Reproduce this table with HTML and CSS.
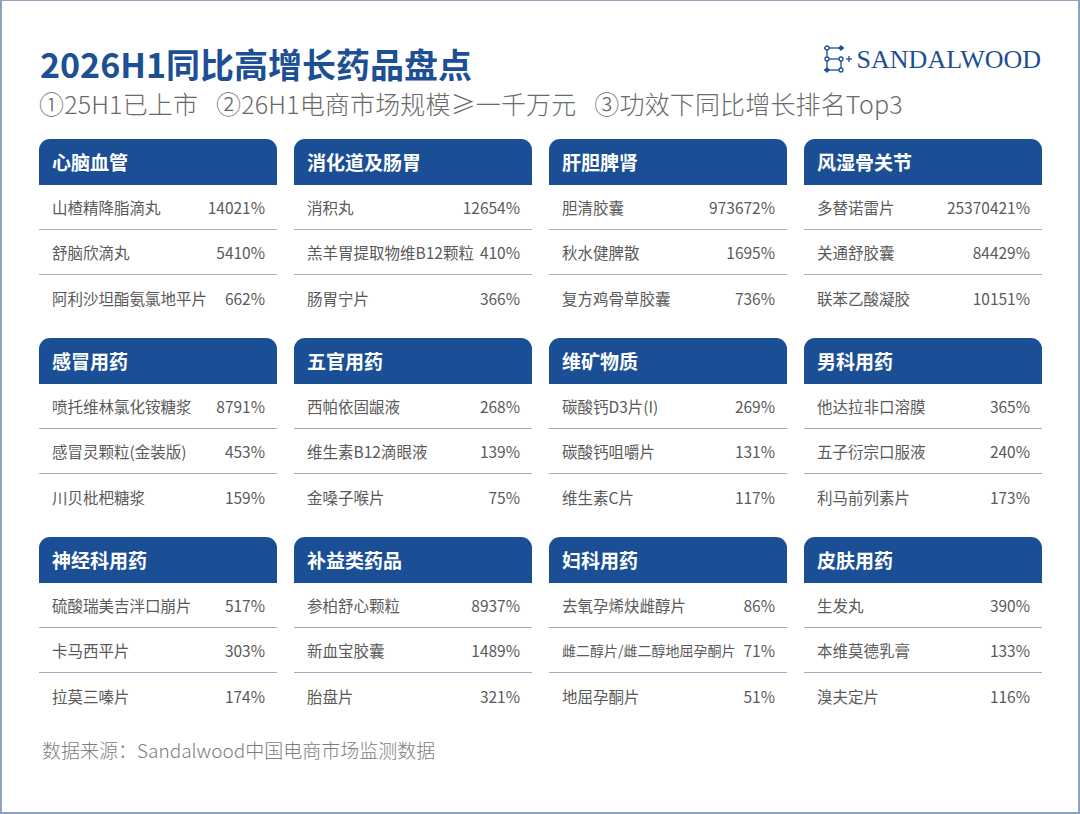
FILE: index.html
```html
<!DOCTYPE html>
<html lang="zh-CN">
<head>
<meta charset="utf-8">
<link rel="stylesheet" href="styles.css">
</head>
<body>
<div class="page">
  <header class="top">
    <div class="title-row">
      <h1 class="title">2026H1同比高增长药品盘点</h1>
      <div class="logo">
        <svg class="logo-mark" width="32" height="30" viewBox="0 0 32 30">
          <g stroke="#1d4f93" stroke-width="1.3" fill="none">
            <line x1="5" y1="3" x2="19" y2="3"/>
            <line x1="5" y1="14" x2="19" y2="14"/>
            <line x1="5" y1="25" x2="19" y2="25"/>
            <line x1="5" y1="3" x2="5" y2="25"/>
            <line x1="19" y1="14" x2="19" y2="25"/>
            <line x1="2" y1="3" x2="5" y2="3"/>
            <line x1="2" y1="25" x2="5" y2="25"/>
            <line x1="19" y1="3" x2="22" y2="3"/>
            <circle cx="5" cy="3" r="2" fill="#fff"/>
            <circle cx="5" cy="14" r="2" fill="#fff"/>
            <circle cx="19" cy="14" r="2" fill="#fff"/>
            <circle cx="19" cy="25" r="2" fill="#fff"/>
            <line x1="24" y1="14" x2="30" y2="14"/>
            <line x1="27" y1="11" x2="27" y2="17"/>
          </g>
          <polygon points="19,0 22,3 19,6 16,3" fill="#1d4f93"/>
          <polygon points="5,22 8,25 5,28 2,25" fill="#1d4f93"/>
        </svg>
        <span class="logo-text">SANDALWOOD</span>
      </div>
    </div>
    <p class="subtitle"><span class="crit">①25H1已上市</span><span class="crit">②26H1电商市场规模≥一千万元</span><span class="crit">③功效下同比增长排名Top3</span></p>
  </header>

  <main class="grid">
    <section class="card">
      <h2 class="card-head">心脑血管</h2>
      <div class="row"><span class="name">山楂精降脂滴丸</span><span class="val">14021%</span></div>
      <div class="row"><span class="name">舒脑欣滴丸</span><span class="val">5410%</span></div>
      <div class="row"><span class="name">阿利沙坦酯氨氯地平片</span><span class="val">662%</span></div>
    </section>
    <section class="card">
      <h2 class="card-head">消化道及肠胃</h2>
      <div class="row"><span class="name">消积丸</span><span class="val">12654%</span></div>
      <div class="row"><span class="name">羔羊胃提取物维B12颗粒</span><span class="val">410%</span></div>
      <div class="row"><span class="name">肠胃宁片</span><span class="val">366%</span></div>
    </section>
    <section class="card">
      <h2 class="card-head">肝胆脾肾</h2>
      <div class="row"><span class="name">胆清胶囊</span><span class="val">973672%</span></div>
      <div class="row"><span class="name">秋水健脾散</span><span class="val">1695%</span></div>
      <div class="row"><span class="name">复方鸡骨草胶囊</span><span class="val">736%</span></div>
    </section>
    <section class="card">
      <h2 class="card-head">风湿骨关节</h2>
      <div class="row"><span class="name">多替诺雷片</span><span class="val">25370421%</span></div>
      <div class="row"><span class="name">关通舒胶囊</span><span class="val">84429%</span></div>
      <div class="row"><span class="name">联苯乙酸凝胶</span><span class="val">10151%</span></div>
    </section>

    <section class="card">
      <h2 class="card-head">感冒用药</h2>
      <div class="row"><span class="name">喷托维林氯化铵糖浆</span><span class="val">8791%</span></div>
      <div class="row"><span class="name">感冒灵颗粒(金装版)</span><span class="val">453%</span></div>
      <div class="row"><span class="name">川贝枇杷糖浆</span><span class="val">159%</span></div>
    </section>
    <section class="card">
      <h2 class="card-head">五官用药</h2>
      <div class="row"><span class="name">西帕依固龈液</span><span class="val">268%</span></div>
      <div class="row"><span class="name">维生素B12滴眼液</span><span class="val">139%</span></div>
      <div class="row"><span class="name">金嗓子喉片</span><span class="val">75%</span></div>
    </section>
    <section class="card">
      <h2 class="card-head">维矿物质</h2>
      <div class="row"><span class="name">碳酸钙D3片(I)</span><span class="val">269%</span></div>
      <div class="row"><span class="name">碳酸钙咀嚼片</span><span class="val">131%</span></div>
      <div class="row"><span class="name">维生素C片</span><span class="val">117%</span></div>
    </section>
    <section class="card">
      <h2 class="card-head">男科用药</h2>
      <div class="row"><span class="name">他达拉非口溶膜</span><span class="val">365%</span></div>
      <div class="row"><span class="name">五子衍宗口服液</span><span class="val">240%</span></div>
      <div class="row"><span class="name">利马前列素片</span><span class="val">173%</span></div>
    </section>

    <section class="card">
      <h2 class="card-head">神经科用药</h2>
      <div class="row"><span class="name">硫酸瑞美吉泮口崩片</span><span class="val">517%</span></div>
      <div class="row"><span class="name">卡马西平片</span><span class="val">303%</span></div>
      <div class="row"><span class="name">拉莫三嗪片</span><span class="val">174%</span></div>
    </section>
    <section class="card">
      <h2 class="card-head">补益类药品</h2>
      <div class="row"><span class="name">参柏舒心颗粒</span><span class="val">8937%</span></div>
      <div class="row"><span class="name">新血宝胶囊</span><span class="val">1489%</span></div>
      <div class="row"><span class="name">胎盘片</span><span class="val">321%</span></div>
    </section>
    <section class="card">
      <h2 class="card-head">妇科用药</h2>
      <div class="row"><span class="name">去氧孕烯炔雌醇片</span><span class="val">86%</span></div>
      <div class="row"><span class="name name-tight">雌二醇片/雌二醇地屈孕酮片</span><span class="val">71%</span></div>
      <div class="row"><span class="name">地屈孕酮片</span><span class="val">51%</span></div>
    </section>
    <section class="card">
      <h2 class="card-head">皮肤用药</h2>
      <div class="row"><span class="name">生发丸</span><span class="val">390%</span></div>
      <div class="row"><span class="name">本维莫德乳膏</span><span class="val">133%</span></div>
      <div class="row"><span class="name">溴夫定片</span><span class="val">116%</span></div>
    </section>
  </main>

  <footer class="source">数据来源：Sandalwood中国电商市场监测数据</footer>
</div>
</body>
</html>
```

FILE: styles.css
```css
* { box-sizing: border-box; }
html, body { margin: 0; padding: 0; background: #fff; }
body { font-family: "Noto Sans CJK SC", "Noto Sans", sans-serif; }

.page {
  width: 1080px;
  height: 814px;
  border-style: solid;
  border-color: #8ea2bb;
  border-width: 1px 2px 2px 2px;
  padding: 0 37px;
  overflow: hidden;
}

.top {
  padding-top: 40px;
}

.title-row {
  display: flex;
  justify-content: space-between;
  align-items: flex-start;
}

.title {
  margin: 0;
  font-size: 34px;
  line-height: 46px;
  font-weight: 700;
  color: #1c4f93;
  padding-left: 1px;
}

.subtitle {
  margin: 0;
  font-size: 25px;
  line-height: 32px;
  font-weight: 300;
  color: #6a6a6a;
  white-space: nowrap;
  letter-spacing: 0.15px;
}

.crit { margin-right: 18px; }

.logo {
  display: flex;
  align-items: center;
  gap: 3px;
  margin-top: 4px;
}

.logo-mark { display: block; }

.logo-text {
  font-family: "Liberation Serif", "DejaVu Serif", serif;
  font-size: 26px;
  color: #1d4f93;
  line-height: 30px;
}

.grid {
  display: grid;
  grid-template-columns: repeat(4, 238px);
  column-gap: 17px;
  row-gap: 18px;
  margin-top: 20px;
}

.card { display: flex; flex-direction: column; }

.card-head {
  margin: 0;
  height: 46px;
  line-height: 46px;
  padding-left: 13px;
  background: #1b4f95;
  color: #fff;
  font-size: 19px;
  font-weight: 700;
  border-radius: 11px 11px 0 0;
}

.row {
  display: flex;
  justify-content: space-between;
  align-items: center;
  gap: 4px;
  height: 45px;
  padding: 0 12px 0 13px;
  border-bottom: 1px solid #9cb0c8;
  font-size: 15.5px;
  color: #5a5a5a;
  white-space: nowrap;
}

.row:last-child { border-bottom: none; }

.name-tight { font-size: 14px; }

.source {
  margin-top: 19px;
  padding-left: 3px;
  font-size: 19px;
  line-height: 26px;
  color: #7d7d7d;
  font-weight: 300;
}
```
